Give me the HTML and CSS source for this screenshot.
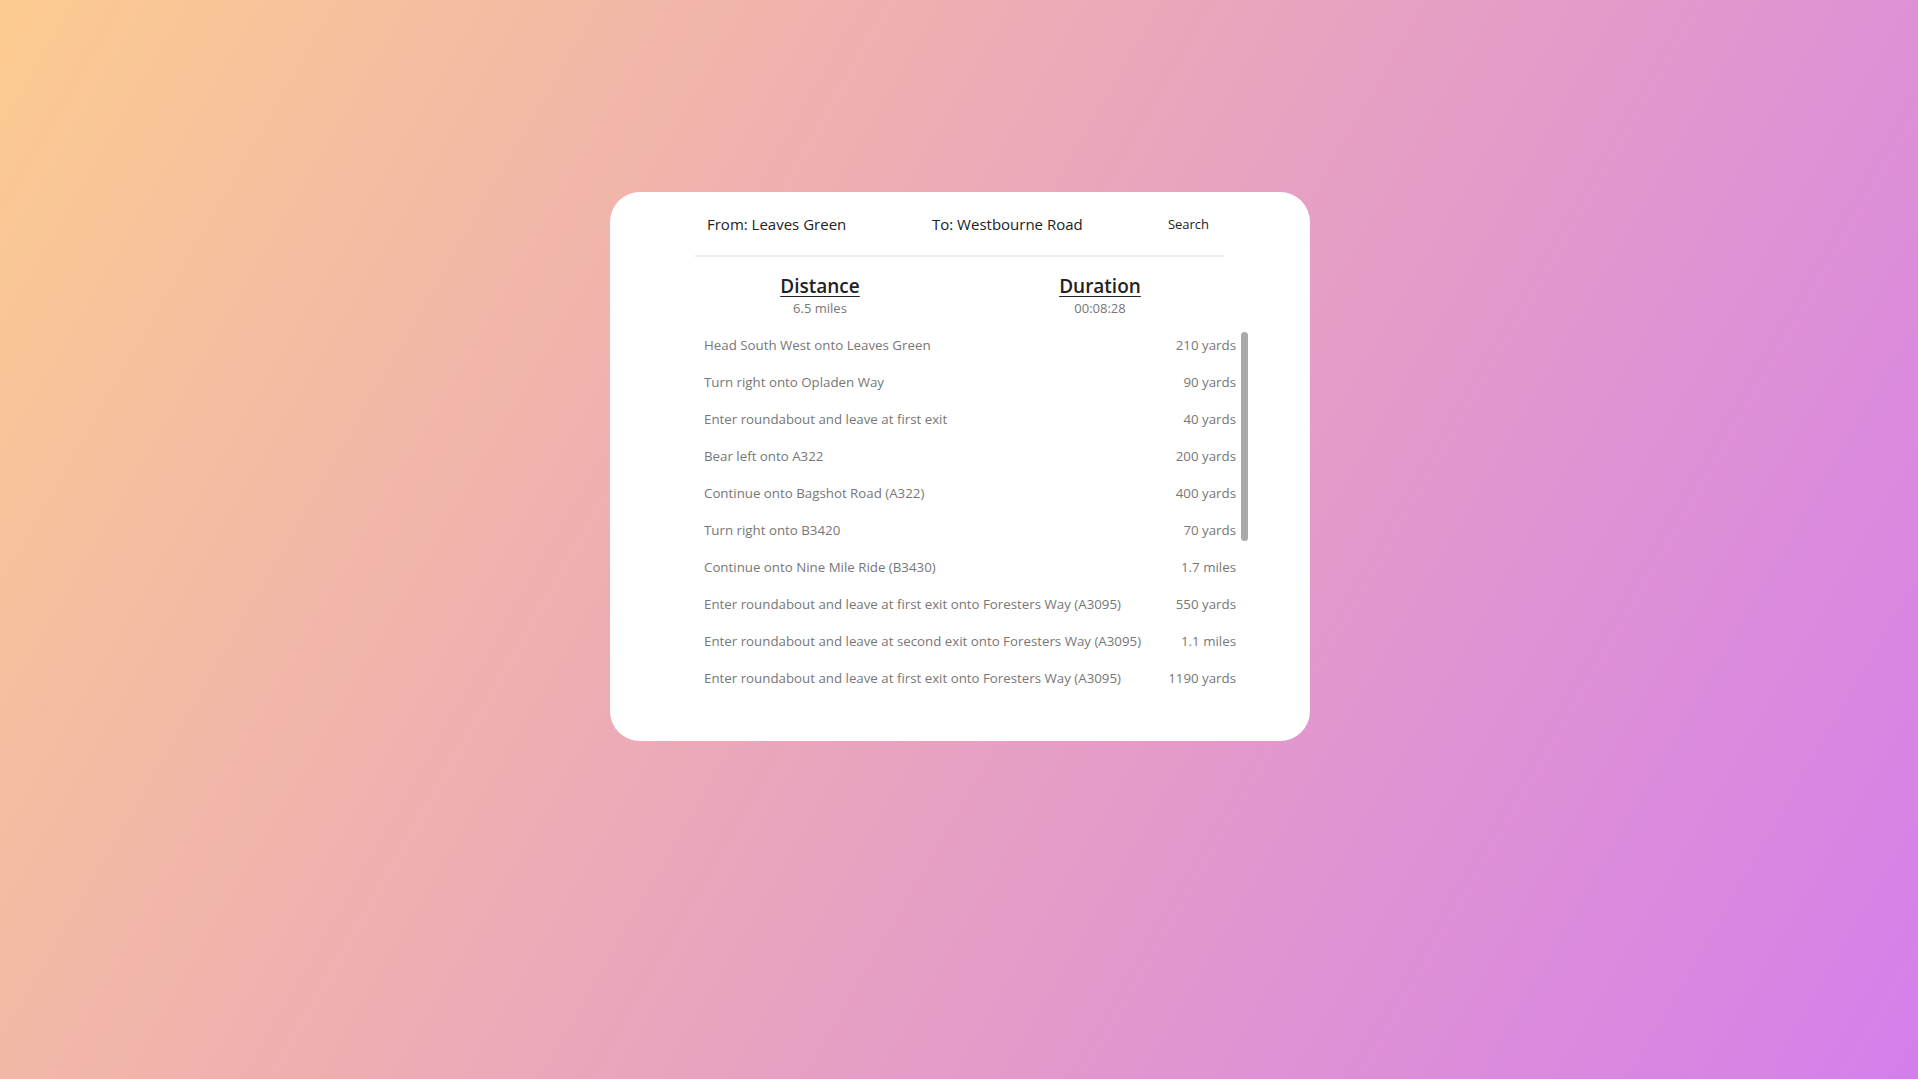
FILE: index.html
```html
<!DOCTYPE html>
<html lang="en">
<head>
<meta charset="utf-8">
<title>Route</title>
<link rel="stylesheet" href="styles.css">
</head>
<body>
<main class="card">
  <form class="search">
    <div class="field">From: Leaves Green</div>
    <div class="field">To: Westbourne Road</div>
    <button type="button" class="btn">Search</button>
  </form>
  <section class="stats">
    <div class="stat">
      <h2 class="stat-title">Distance</h2>
      <div class="stat-value">6.5 miles</div>
    </div>
    <div class="stat">
      <h2 class="stat-title">Duration</h2>
      <div class="stat-value">00:08:28</div>
    </div>
  </section>
  <div class="steps-wrap">
    <ul class="steps">
      <li class="step"><span>Head South West onto Leaves Green</span><span>210 yards</span></li>
      <li class="step"><span>Turn right onto Opladen Way</span><span>90 yards</span></li>
      <li class="step"><span>Enter roundabout and leave at first exit</span><span>40 yards</span></li>
      <li class="step"><span>Bear left onto A322</span><span>200 yards</span></li>
      <li class="step"><span>Continue onto Bagshot Road (A322)</span><span>400 yards</span></li>
      <li class="step"><span>Turn right onto B3420</span><span>70 yards</span></li>
      <li class="step"><span>Continue onto Nine Mile Ride (B3430)</span><span>1.7 miles</span></li>
      <li class="step"><span>Enter roundabout and leave at first exit onto Foresters Way (A3095)</span><span>550 yards</span></li>
      <li class="step"><span>Enter roundabout and leave at second exit onto Foresters Way (A3095)</span><span>1.1 miles</span></li>
      <li class="step"><span>Enter roundabout and leave at first exit onto Foresters Way (A3095)</span><span>1190 yards</span></li>
    </ul>
    <div class="thumb"></div>
  </div>
</main>
</body>
</html>
```
FILE: styles.css
```css
* { box-sizing: border-box; }
html, body { margin: 0; padding: 0; }
body {
  min-height: 100vh;
  background: linear-gradient(120deg, #fccb90 0%, #d57eeb 100%);
  font-family: "Open Sans", "Noto Sans", sans-serif;
  display: flex;
  flex-direction: column;
  align-items: center;
  padding: 192px 0 0 2px;
}
.card {
  width: 700px;
  height: 549px;
  background: #fff;
  border-radius: 30px;
  padding: 0 86px 0 85px;
}
.search {
  display: flex;
  align-items: center;
  height: 65px;
  border-bottom: 2px solid #eeeeee;
  margin: 0;
}
.field {
  width: 225px;
  padding-left: 12px;
  font-size: 15px;
  color: #222;
}
.btn {
  flex: 1;
  background: none;
  border: none;
  font-family: inherit;
  font-size: 13px;
  color: #222;
  padding: 0 0 0 8px;
  text-align: center;
}
.stats {
  display: grid;
  grid-template-columns: 280px 280px;
  margin: 16px -15px 0 -15px;
  text-align: center;
}
.stat-title {
  margin: 0;
  font-size: 19px;
  line-height: 27px;
  font-weight: 600;
  color: #222;
  text-decoration: underline;
  text-underline-offset: 3px;
}
.stat-value {
  font-size: 13px;
  line-height: 17px;
  color: #777;
}
.steps-wrap {
  position: relative;
  margin: 9px -27px 0 0;
}
.steps {
  list-style: none;
  margin: 0;
  padding: 0 15px 0 9px;
}
.step {
  display: flex;
  justify-content: space-between;
  align-items: center;
  height: 37px;
  font-size: 13.3px;
  color: #777;
}
.thumb {
  position: absolute;
  right: 3px;
  top: 6px;
  width: 7px;
  height: 209px;
  border-radius: 4px;
  background: #a9a9a9;
}
```
